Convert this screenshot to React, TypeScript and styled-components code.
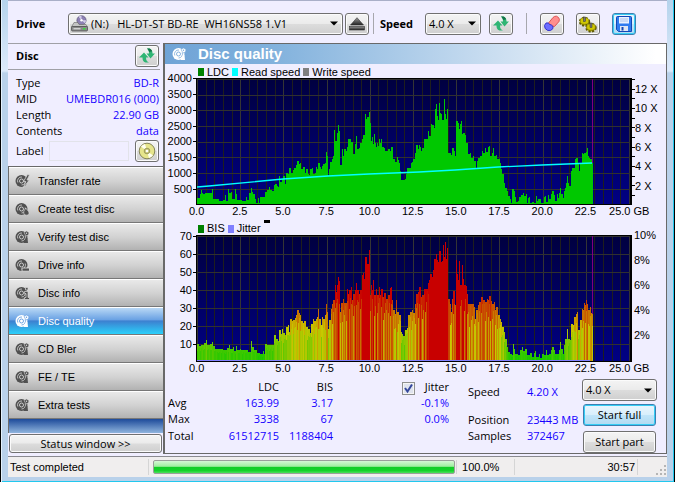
import React from "react";
import styled, { createGlobalStyle, css } from "styled-components";

const ui = `"Open Sans", "Noto Sans", sans-serif`;
const arial = `"Liberation Sans", Arial, sans-serif`;
const blue = "#1400ff";

const GlobalStyle = createGlobalStyle`
  * { box-sizing: border-box; }
  body { margin: 0; background: #b9d1ea; }
  button, select, input { font: inherit; color: inherit; margin: 0; }
`;

const Frame = styled.div`
  min-height: 100vh;
  display: flex;
  padding: 0 7px 5px;
  background: linear-gradient(#b5d3ec 0, #dceafa 71px, #b9d1ea 73px);
  border: 1px solid #000;
  border-top: 0;
  box-shadow: inset 1px 0 #e4f1fc, inset -1px -1px #22c8ee;
  font: 11px/16px ${ui};
  color: #000;
`;
const Client = styled.div`
  flex: 1;
  min-width: 0;
  display: flex;
  flex-direction: column;
  background: #f0eeff;
  border-top: 1px solid #a9afc8;
`;

const Toolbar = styled.header`
  height: 42px;
  display: flex;
  align-items: center;
  padding: 3px 30px 0 8px;
`;
const BoldLabel = styled.label<{ $width: number }>`
  font-weight: 700;
  width: ${(p) => p.$width}px;
`;
const Separator = styled.span<{ $left: number; $right: number }>`
  width: 1px;
  height: 21px;
  background: #a7a7ad;
  margin: 0 ${(p) => p.$right}px 0 ${(p) => p.$left}px;
`;

const face = css`
  background: linear-gradient(#f4f4f4, #ebebeb 48%, #dcdcdc 52%, #cfcfcf);
  border: 1px solid #707070;
  border-radius: 3px;
  box-shadow: inset 0 0 0 1px #fbfbfb;
`;
const hot = css`
  background: linear-gradient(#eaf6fd, #d8effc 48%, #c0e5f9 52%, #b0daf2);
  border: 1px solid #3c7fb1;
  border-radius: 3px;
  box-shadow: inset 0 0 0 1px #35cdf5;
`;
const IconButton = styled.button<{ $hot?: boolean; $gap?: number }>`
  ${(p) => (p.$hot ? hot : face)}
  width: 24px;
  height: 22px;
  flex: none;
  padding: 0;
  display: grid;
  place-items: center;
  margin-left: ${(p) => p.$gap ?? 0}px;
`;
const PushButton = styled.button<{ $hot?: boolean }>`
  ${(p) => (p.$hot ? hot : face)}
  height: 22px;
  padding: 0;
`;

const SelectBox = styled.span<{ $width?: number }>`
  display: grid;
  align-items: center;
  flex: ${(p) => (p.$width ? `0 0 ${p.$width}px` : "0 1 275px")};
  min-width: 0;
  height: 22px;
  > * { grid-area: 1 / 1; }
  > svg { justify-self: end; margin-right: 5px; pointer-events: none; }
`;
const SelectField = styled.select<{ $indent: number }>`
  ${face}
  appearance: none;
  width: 100%;
  height: 22px;
  padding: 0 14px 0 ${(p) => p.$indent}px;
`;
const DriveSlot = styled.span`
  display: grid;
  flex: 0 1 275px;
  min-width: 0;
  align-items: center;
  > * { grid-area: 1 / 1; }
  > svg { margin-left: 3px; pointer-events: none; }
`;

const Arrow = () => (
  <svg width="8" height="5" viewBox="0 0 8 5"><path d="M0 .5h8L4 4.5z" fill="#000" /></svg>
);

function Select({ id, label, width, indent = 3, options }: { id: string; label?: string; width?: number; indent?: number; options: string[] }) {
  return (
    <SelectBox $width={width}>
      <SelectField id={id} aria-label={label} $indent={indent}>
        {options.map((o) => <option key={o}>{o}</option>)}
      </SelectField>
      <Arrow />
    </SelectBox>
  );
}

const Body = styled.div`
  flex: 1;
  display: grid;
  grid-template-columns: 155px minmax(0, 1fr);
`;

const Side = styled.aside`
  display: flex;
  flex-direction: column;
`;
const DiscHead = styled.div`
  display: flex;
  align-items: center;
  justify-content: space-between;
  height: 27px;
  margin-right: 3px;
  padding: 0 1px 1px 8px;
  border: solid #a0a0a6;
  border-width: 1px 0;
  font-weight: 700;
`;
const Facts = styled.dl`
  margin: 0;
  padding: 5px 4px 0 8px;
  display: grid;
  grid-template-columns: auto 1fr;
  dd { margin: 0; text-align: right; color: ${blue}; }
`;
const LabelRow = styled.div`
  display: flex;
  align-items: center;
  height: 27px;
  padding: 0 4px 4px 8px;
  label { width: 33px; }
`;
const LabelInput = styled.input`
  flex: 1;
  min-width: 0;
  height: 20px;
  margin-right: 6px;
  background: #f0eeff;
  border: 1px solid #e2e3ea;
`;
const Nav = styled.nav`
  border-left: 1px solid #6d6d6d;
  border-top: 1px solid #696969;
  background: linear-gradient(#1d4a9a, #8fb4dd) bottom / 100% 14px no-repeat;
  padding-bottom: 14px;
`;
const NavButton = styled.button<{ $active?: boolean }>`
  display: flex;
  align-items: center;
  gap: 8px;
  width: 100%;
  height: 28px;
  padding: 0 0 0 6px;
  border: 0;
  border-top: 1px solid #fff;
  border-bottom: 1px solid #777;
  font: 11px/14px ${arial};
  color: ${(p) => (p.$active ? "#fff" : "#000")};
  background: ${(p) => p.$active
    ? "linear-gradient(#b9d8f5, #6aa2e4 45%, #3d80d0 50%, #2ad0fa)"
    : "linear-gradient(#e9e9e9, #d2d2d2 50%, #b2b2b2)"};
`;
const StatusButton = styled(PushButton)`
  margin: 1px 1px 0;
  height: 19px;
  line-height: 16px;
`;

const Panel = styled.main`
  display: flex;
  flex-direction: column;
  border: 1px solid #696969;
  border-left-width: 2px;
  margin-bottom: 2px;
`;
const Title = styled.h1`
  margin: 0;
  height: 20px;
  display: flex;
  align-items: center;
  gap: 11px;
  padding-left: 7px;
  font: 700 15px/20px ${arial};
  color: #fff;
  background: linear-gradient(90deg, #6fa3d6, #7fb0dc 20%, #c4daef 62%, #fff 98%);
`;

const ChartBox = styled.section`
  font: 11px/13px ${arial};
`;
const Legend = styled.div<{ $tall?: boolean }>`
  display: flex;
  align-items: center;
  height: ${(p) => (p.$tall ? 16 : 14)}px;
  padding: ${(p) => (p.$tall ? 3 : 2)}px 0 0 33px;
  white-space: pre;
`;
const Key = styled.span<{ $color: string }>`
  display: flex;
  align-items: center;
  margin-right: 3px;
  &::before {
    content: "";
    width: 6px;
    height: 8px;
    margin-right: 3px;
    background: ${(p) => p.$color};
  }
`;
const Marker = styled.span`
  align-self: flex-start;
  width: 6px;
  height: 3px;
  margin-top: -2px;
  background: #000;
`;
const PlotRow = styled.div`
  display: grid;
  grid-template-columns: 31px minmax(0, 1fr) 34px;
  height: 127px;
`;
const LeftScale = styled.div<{ $lift: number }>`
  display: flex;
  flex-direction: column;
  height: 126px;
  margin-top: -${(p) => p.$lift}px;
  span {
    flex: 1;
    display: flex;
    align-items: center;
    justify-content: flex-end;
    gap: 1px;
  }
  span::after { content: ""; width: 3px; height: 1px; background: #000; }
`;
const RightScale = styled.div<{ $top: number; $height: number }>`
  display: flex;
  flex-direction: column;
  height: ${(p) => p.$height}px;
  margin-top: ${(p) => p.$top}px;
  span { flex: 1; display: flex; align-items: center; }
`;
const RightSide = styled.div<{ $pad: number }>`
  display: flex;
  padding-left: ${(p) => p.$pad}px;
  white-space: nowrap;
`;
const Plot = styled.svg`
  display: block;
  width: 100%;
  height: 127px;
  border: 1px solid #000;
  border-right-width: 2px;
  background: linear-gradient(#000040, #000084);
`;
const BottomScale = styled.div`
  display: flex;
  margin-left: 10px;
  height: 14px;
  span { flex: 1; text-align: center; }
  span:last-child { flex: 0 0 59px; text-align: left; padding-left: 2px; }
`;

/* Traces are flat x, y lists on a grid three units to the pixel. */
type Trace = { dx: number; base: number; pts: number[] };

const ldc: Trace[] = [
  { dx: -111, base: 434, pts: [111,415,120,405,124,393,127,400,130,405,135,400,155,402,157,388,159,405,160,418,170,420,178,424,190,421,196,408,198,424,204,388,207,400,213,398,216,420,226,390,228,405,231,422,245,424,258,412,262,422,266,400,273,385,276,398,280,405,284,420,288,430,293,415,297,430,301,414,310,412,316,398,322,393,327,382,331,393,336,396,341,376,345,373,350,380,354,382,358,350,361,367,366,358,370,350,374,375,378,340,383,343,388,325,392,340,396,340,400,333,403,325,407,317,412,306,416,315,420,310,424,330,430,322,434,340,439,330,443,345,447,348,451,330,455,325,459,343,464,340,468,322,472,330,475,310,479,322,482,328,486,320,490,315,496,310,499,278,502,290,505,348,508,330,511,308,515,300,518,290,522,212,526,245,530,220,534,198,538,215,541,318,545,270,550,290,553,270,557,275,560,262,565,240,570,240,574,248,579,285,584,255,588,230,592,270,597,265,601,250,605,240,608,227,612,227,615,165,619,180,622,172,626,158,629,190,632,245,635,232,639,253,641,225,644,250,648,262,651,250,655,260,657,238,660,250,663,240,667,262,671,265,675,275,679,275,683,268,688,270,691,275,694,262,698,262,700,300,706,308,710,293,714,302,718,310,721,335,724,362,735,360,738,345,742,325,747,325,752,310,756,308,760,300,764,282,769,258,773,270,777,258] },
  { dx: 654, base: 434, pts: [14,262,18,275,22,265,26,240,30,238,34,240,38,215,43,230,47,195,52,198,56,207,60,150,63,135,66,170,69,182,72,130,75,160,79,165,82,182,86,120,89,165,93,180,96,150,98,165,99,280,104,282,108,288,112,265,117,275,121,290,124,185,128,190,132,210,134,195,138,185,141,225,145,222,149,228,152,250,156,250,160,285,164,280,168,295,174,290,178,305,182,325,185,305,190,295,195,290,200,275,205,280,209,265,213,278,218,262,223,260,226,290,230,280,234,265,238,290,242,288,246,300,250,300,254,310,258,330,262,345,266,370,270,385,275,395,280,410,285,420,288,430,292,390,296,395,299,412,303,428,308,425,312,412,317,408,323,402,328,410,332,405,336,430,339,415,343,412,346,430,350,415,352,428,358,430,362,410,366,425,370,420,378,430,382,432,386,412,390,410,394,428,398,408,402,420,408,405,412,395,416,408,420,425,425,405,429,415,433,400,436,385,439,405,443,415,447,395,451,385,454,370,457,350,460,372,463,380,467,335,471,325,476,325,480,300,484,297,488,310,492,335,496,310,500,280,504,285,508,280,513,278,516,267,519,290,522,295,526,300,530,310] },
];
const bis: Trace[] = [
  { dx: -111, base: 437, pts: [111,385,118,392,124,388,132,383,138,373,142,388,150,385,157,380,160,392,166,400,178,400,188,405,200,398,206,388,210,400,218,395,222,408,227,393,231,405,240,400,244,405,255,403,265,410,273,378,276,395,282,405,290,412,300,415,308,408,313,415,316,385,322,390,332,388,338,390,343,360,347,372,354,378,358,345,362,355,367,340,370,352,374,360,378,335,383,330,387,350,390,310,395,318,400,315,405,308,408,300,412,285,416,292,420,300,424,318,428,322,433,318,438,335,444,340,450,352,454,325,458,310,462,318,467,310,472,305,475,282,478,310,482,328,486,305,490,312,496,300,499,265,502,290,505,340,508,315,512,280,516,265,520,255,524,210,528,230,532,210,535,185,538,198,540,290,543,262,548,250,553,262,558,262,560,220,563,235,567,225,572,215,576,255,580,235,585,225,589,203,592,225,597,235,601,225,605,180,608,173,611,190,614,200,616,125,620,145,623,145,626,105,629,240,633,210,637,225,640,195,643,240,648,222,652,240,656,215,660,240,664,222,668,245,672,232,677,250,682,250,685,240,690,218,693,215,697,255,700,285,704,295,707,255,710,290,714,290,718,300,722,350,726,355,730,362,734,345,740,338,745,300,750,290,756,285,760,292,765,265,769,235,773,230,777,215] },
  { dx: 654, base: 437, pts: [14,215,18,245,22,240,26,220,30,222,34,220,38,203,42,195,46,175,50,185,54,165,58,130,63,115,67,135,70,140,73,108,77,140,80,138,83,88,86,125,89,80,92,130,96,98,99,250,105,265,108,290,112,250,115,228,119,240,121,270,124,135,127,175,130,195,133,137,136,210,140,150,143,190,147,210,152,212,155,235,160,265,166,265,172,265,176,275,180,312,184,285,188,270,193,260,198,245,203,255,210,260,215,252,220,255,223,242,227,258,231,265,236,260,240,285,244,275,249,300,254,310,258,320,262,335,266,350,270,370,275,395,280,410,285,415,290,420,293,385,296,400,300,415,308,418,314,405,320,395,324,408,330,400,335,420,342,420,346,412,350,425,356,412,360,408,364,425,372,415,376,428,382,415,388,420,393,405,397,420,403,415,408,405,412,395,416,405,420,415,427,415,431,405,435,380,439,400,443,415,447,390,451,370,457,340,460,370,464,375,468,325,473,330,478,305,482,295,487,290,490,345,495,315,500,280,503,285,506,262,509,268,512,255,516,265,520,285,525,275,529,292] },
];

const COUNT = 396;
function columns(traces: Trace[]): number[] {
  const out: number[] = new Array(COUNT).fill(0);
  let from = 0;
  let last = 0;
  for (const t of traces) {
    for (let i = 0; i < t.pts.length; i += 2) {
      const x = Math.round((t.pts[i] + t.dx) / 3);
      for (; from < x && from < COUNT; from++) out[from] = last;
      last = Math.round((t.base - t.pts[i + 1]) / 3);
    }
  }
  for (; from < COUNT; from++) out[from] = last;
  return out;
}
const ldcColumns = columns(ldc);
const bisColumns = columns(bis);

function heat(height: number) {
  const v = height / 1.8;
  const r = Math.min(200, Math.round(v * 10));
  const g = Math.max(0, Math.min(200, Math.round(200 - (v - 20) * 10)));
  return `rgb(${r},${g},0)`;
}
const jitterOf = (i: number) => ((i * 7919 + (i % 7) * 131 + (i % 11) * 37) % 97) / 97;

function Grid({ rows }: { rows: number }) {
  const lines = [];
  for (let i = 0; i <= 50; i++) {
    const x = Math.round(i * 8.64);
    lines.push(<rect key={`v${i}`} x={x} y="0" width="1" height="125" fill={i % 5 ? "#1e1e1e" : "#343434"} />);
  }
  for (let i = 0; i < rows; i++) {
    lines.push(<rect key={`h${i}`} x="0" y={Math.round((i * 125.5) / rows)} width="433" height="1" fill="#303030" />);
  }
  return <g shapeRendering="crispEdges">{lines}</g>;
}

const xTicks = ["0.0", "2.5", "5.0", "7.5", "10.0", "12.5", "15.0", "17.5", "20.0", "22.5", "25.0 GB"];
const XScale = () => <BottomScale>{xTicks.map((t) => <span key={t}>{t}</span>)}</BottomScale>;

function LdcChart() {
  return (
    <ChartBox>
      <Legend>
        <Key $color="#008000">LDC</Key>
        <Key $color="#00ffff">Read speed</Key>
        <Key $color="#808080">Write speed</Key>
      </Legend>
      <PlotRow>
        <LeftScale $lift={7}>
          {[4000, 3500, 3000, 2500, 2000, 1500, 1000, 500].map((n) => <span key={n}>{n}</span>)}
        </LeftScale>
        <Plot viewBox="0 0 433 125" preserveAspectRatio="none" role="img" aria-label="LDC and read speed">
          <Grid rows={8} />
          <g fill="#00c800" shapeRendering="crispEdges">
            {ldcColumns.map((h, i) => <rect key={i} x={i} y={125 - h} width="1" height={h} />)}
          </g>
          <rect x="395" y="0" width="1" height="84" fill="#800080" shapeRendering="crispEdges" />
          <polyline points="0,108 12,107 86,100 131,97 172,95 222,93 258,91 301,88 345,86 395,84" fill="none" stroke="#00ffff" strokeWidth="1.3" />
        </Plot>
        <RightSide $pad={0}>
          <svg width="3" height="127" viewBox="0 0 3 127">
            {Array.from({ length: 13 }, (_, i) => (
              <rect key={i} x="0" y={Math.round(1 + i * 9.65)} width="3" height="1" />
            ))}
          </svg>
          <RightScale $top={2} $height={116}>
            {["12 X", "10 X", "8 X", "6 X", "4 X", "2 X"].map((t) => <span key={t}>{t}</span>)}
          </RightScale>
        </RightSide>
      </PlotRow>
      <XScale />
    </ChartBox>
  );
}

function BisChart() {
  return (
    <ChartBox>
      <Legend $tall>
        <Key $color="#008000">BIS</Key>
        <Key $color="#8080ff">Jitter</Key>
        <Marker />
      </Legend>
      <PlotRow>
        <LeftScale $lift={8}>
          {[70, 60, 50, 40, 30, 20, 10].map((n) => <span key={n}>{n}</span>)}
        </LeftScale>
        <Plot viewBox="0 0 433 125" preserveAspectRatio="none" role="img" aria-label="BIS and jitter">
          <Grid rows={7} />
          <g shapeRendering="crispEdges">
            {bisColumns.map((h, i) => {
              const low = Math.round(h * (0.6 + 0.4 * jitterOf(i)));
              return (
                <React.Fragment key={i}>
                  <rect x={i} y={125 - h} width="1" height={h} fill={heat(h)} />
                  <rect x={i} y={125 - low} width="1" height={low} fill={heat(h > 80 ? h : low)} />
                </React.Fragment>
              );
            })}
          </g>
          <rect x="395" y="0" width="1" height="78" fill="#800080" shapeRendering="crispEdges" />
          <rect x="0" y="124" width="393" height="1" fill="#8080ff" />
        </Plot>
        <RightSide $pad={2}>
          <RightScale $top={-12} $height={125}>
            {["10%", "8%", "6%", "4%", "2%"].map((t) => <span key={t}>{t}</span>)}
          </RightScale>
        </RightSide>
      </PlotRow>
      <XScale />
    </ChartBox>
  );
}

const Results = styled.div`
  display: flex;
  padding: 3px 9px 0 3px;
  height: 77px;
`;
const Stats = styled.table`
  border-collapse: collapse;
  table-layout: fixed;
  width: 281px;
  height: 65px;
  th, td { padding: 0; font-weight: 400; text-align: right; height: 16px; }
  td { color: ${blue}; }
  th[scope="row"] { text-align: left; }
`;
const Col = styled.col<{ $w: number }>`width: ${(p) => p.$w}px;`;
const Check = styled.input`
  appearance: none;
  display: block;
  width: 13px;
  height: 13px;
  border: 1px solid #8e8f8f;
  background: #dfe3ee;
  box-shadow: inset 0 0 0 1px #f4f4f4;
`;
const CheckWrap = styled.span`
  display: inline-grid;
  vertical-align: middle;
  > * { grid-area: 1 / 1; }
  > svg { pointer-events: none; }
`;
const Readout = styled.dl`
  margin: 0 0 0 19px;
  display: grid;
  grid-template-columns: 59px auto;
  grid-template-rows: 33px 16px 16px;
  align-content: start;
  line-height: 16px;
  dt, dd { margin: 0; white-space: nowrap; }
  dt:nth-of-type(1), dd:nth-of-type(1) { padding-top: 5px; }
  dd { color: ${blue}; }
`;
const Actions = styled.div`
  margin-left: auto;
  width: 75px;
  display: flex;
  flex-direction: column;
  gap: 3px;
  > span { flex: none; }
  > button { margin: 0 1px; }
  > button:last-child { margin-top: 2px; }
`;

const StatusBar = styled.footer`
  height: 21px;
  display: flex;
  align-items: center;
  background: #f0eeee;
  border-top: 1px solid #8a8a90;
  font: 11px/14px ${arial};
`;
const Pane = styled.span<{ $w?: number; $right?: boolean }>`
  flex: ${(p) => (p.$w ? `0 0 ${p.$w}px` : "1")};
  height: 16px;
  padding: 1px 2px;
  border-right: 1px solid #d5d5d5;
  text-align: ${(p) => (p.$right ? "right" : "left")};
`;
const ProgressPane = styled.span`
  flex: 2 1 308px;
  padding: 0 1px 0 4px;
  border-right: 1px solid #d5d5d5;
`;
const Progress = styled.div`
  height: 14px;
  border: 1px solid #9a9f9a;
  border-radius: 2px;
  background: linear-gradient(#d5f7d5, #9eee9e 45%, #12cc26 50%, #14d22a 80%, #4be05c);
`;

const DiscIcon = ({ color = "#505050", hole = "#d8d8d8", kind = "quality" }: { color?: string; hole?: string; kind?: string }) => (
  <svg width="15" height="14" viewBox="0 0 15 14">
    <circle cx="6.500" cy="7" r="6" fill={color} />
    <path d="M2.800 8.500A4 4 0 0 1 7 3M10.200 5.500A4 4 0 0 1 6.500 11" fill="none" stroke={hole} strokeWidth=".8" />
    <circle cx="6.500" cy="7" r="2" fill="none" stroke={hole} strokeWidth=".9" />
    {kind === "rate" && <path d="M12.500 .5 8.500 7.500h2.300L8.500 13.500l5.800-7.500h-2.300L14.500 1z" fill={color} stroke={hole} strokeWidth=".8" />}
    {kind === "create" && <path d="M10.800 6c-.8 2-2.800 3-2 5.500 1 2.200 4.700 2.200 5.200 0C14.500 9 12 8.500 10.800 6z" fill={color} stroke={hole} strokeWidth=".7" />}
    {kind === "drive" && <path d="M7 10h7.500v3.200H7z" fill={color} stroke={hole} strokeWidth=".9" />}
    {kind === "info" && <path d="M9.500 5.500H13v6h1.500v2h-5v-2H11v-4H9.500zM10.500 1.500H13V4h-2.500z" fill={color} stroke={hole} strokeWidth=".7" />}
    {kind === "quality" && (
      <g fill={color}>
        <path d="M9 2.500 11.500 1l2.500 1.500-.5 2.500-2.500 1z" stroke={hole} strokeWidth=".6" />
        <circle cx="11.500" cy="3.300" r=".7" fill={hole} />
        <path d="M10.500 8.500 12.500 8l.5 5H8.500z" />
      </g>
    )}
  </svg>
);
const TitleIcon = () => <DiscIcon color="#fff" hole="#78a9d9" />;

const RefreshIcon = () => (
  <svg width="18" height="18" viewBox="0 0 18 18">
    <path d="M6 5.500 10.500 10.500H8c0 3 1 4 3 5H7.500c-2.500-1-3-2.500-3-5H1z" fill="#2fb574" />
    <path d="M9 1.500h2.500c2.500 1 3 3 3 5h2.500L12.500 11.500 8.500 6.500H11c0-2-.5-3.500-2-5z" fill="#2fb574" />
    <path d="M9 1.500h2.500c1.500.6 2.300 1.600 2.700 2.700l-3 .8C10.800 3.700 10.200 2.500 9 1.500z" fill="#157548" />
  </svg>
);
const EjectIcon = () => (
  <svg width="16" height="14" viewBox="0 0 16 14">
    <defs>
      <linearGradient id="ej" x2="0" y2="1"><stop stopColor="#999" /><stop offset="1" stopColor="#222" /></linearGradient>
    </defs>
    <path d="M8 .7 14.500 8h-13z" fill="url(#ej)" stroke="#333" strokeWidth=".6" />
    <rect x=".5" y="9.500" width="15" height="3.500" fill="url(#ej)" stroke="#333" strokeWidth=".6" />
  </svg>
);
const EraserIcon = () => (
  <svg width="18" height="17" viewBox="0 0 18 17">
    <path d="M5.500 8 10 2.500Q11.500 1 13.500 1.200L15.500 2.500Q17 4 16 6.500L11.500 11.500Q8 12 5.500 8z" fill="#ff8e8e" stroke="#d84a4a" strokeWidth=".9" />
    <path d="M3 8Q5.500 7.200 6.800 9.500 10.500 10 10 13.500 8 16.300 4.800 15.500 1.200 14 1.500 10.500z" fill="#6c6cff" stroke="#2b2bc8" strokeWidth=".9" />
  </svg>
);
const GearsIcon = () => (
  <svg width="20" height="18" viewBox="0 0 20 18">
    {[[6.5, 6], [13, 12]].map(([x, y]) => (
      <g key={x}>
        <ellipse cx={x} cy={y + 0.7} rx="4.600" ry="3.800" fill="#b8b000" stroke="#5b5600" strokeWidth="2.200" strokeDasharray="2 1.400" />
        <ellipse cx={x} cy={y} rx="4.400" ry="3.300" fill="#d0c800" stroke="#857e00" strokeWidth=".7" />
        <rect x={x - 1} y={y - 4} width="2" height="4.500" fill="#777" stroke="#333" strokeWidth=".5" />
      </g>
    ))}
  </svg>
);
const SaveIcon = () => (
  <svg width="16" height="16" viewBox="0 0 16 16">
    <path d="M.5 1.500q0-1 1-1h13q1 0 1 1v14H2.500l-2-2z" fill="#2f7bf0" stroke="#1446b4" />
    <rect x="3" y="1" width="10" height="6.500" fill="#e9f1ff" />
    <path d="M4 3h8M4 5h8" stroke="#9db8e6" strokeWidth=".8" />
    <rect x="4" y="10" width="8" height="5" fill="#dfe6f3" />
    <rect x="5.500" y="11" width="2" height="3.500" fill="#1446b4" />
  </svg>
);
const GoldDisc = () => (
  <svg width="18" height="18" viewBox="0 0 18 18">
    <circle cx="9" cy="9" r="7.800" fill="#e6e58c" stroke="#85855a" />
    <path d="M9 9 3 4.500A7.300 7.300 0 0 1 7 2zM9 9l6 4.500A7.300 7.300 0 0 1 11 16z" fill="#fffff0" />
    <circle cx="9" cy="9" r="2.800" fill="#c9c77a" stroke="#8d8c50" strokeWidth=".8" />
    <circle cx="9" cy="9" r="1.300" fill="#fff" />
  </svg>
);
const DriveIcon = () => (
  <svg width="17" height="17" viewBox="0 0 17 17">
    <circle cx="10.500" cy="5.300" r="4.600" fill="#8d80b4" stroke="#5b5378" strokeWidth=".7" />
    <path d="M10.500 5.300 7.500 1.800A4.600 4.600 0 0 1 10.500.8zM10.500 5.300 14 8.300A4.600 4.600 0 0 0 15 5.300z" fill="#d3cce8" />
    <circle cx="10.500" cy="5.300" r="1.200" fill="#fff" />
    <path d="M3 7.500h4l1 2h7l1.500 2.500H.5z" fill="#c4c4c4" stroke="#666" strokeWidth=".6" />
    <rect x=".5" y="11.500" width="16" height="4.500" rx="1" fill="#8b8b8b" stroke="#444" strokeWidth=".7" />
    <path d="M2.500 13.800h7" stroke="#eee" />
    <rect x="12" y="13" width="2.500" height="1.500" fill="#36e03a" />
  </svg>
);

const Grip = styled.svg`
  flex: none;
  align-self: flex-end;
  margin: 0 1px 2px 18px;
`;

const pages: [string, string][] = [
  ["Transfer rate", "rate"],
  ["Create test disc", "create"],
  ["Verify test disc", "quality"],
  ["Drive info", "drive"],
  ["Disc info", "info"],
  ["Disc quality", "quality"],
  ["CD Bler", "quality"],
  ["FE / TE", "quality"],
  ["Extra tests", "quality"],
];
const nb = "\u00a0";

export default function App() {
  return (
    <>
      <GlobalStyle />
      <Frame>
        <Client>
          <Toolbar>
            <BoldLabel $width={52} htmlFor="drive">Drive</BoldLabel>
            <DriveSlot>
              <Select id="drive" indent={22} options={[`(N:)${nb}${nb} HL-DT-ST BD-RE${nb} WH16NS58 1.V1`]} />
              <DriveIcon />
            </DriveSlot>
            <IconButton $gap={2} aria-label="Eject"><EjectIcon /></IconButton>
            <Separator $left={4} $right={6} />
            <BoldLabel $width={45} htmlFor="speed">Speed</BoldLabel>
            <Select id="speed" width={56} options={["4.0 X"]} />
            <IconButton $gap={8} aria-label="Refresh speeds"><RefreshIcon /></IconButton>
            <Separator $left={13} $right={1} />
            <IconButton $gap={12} aria-label="Erase"><EraserIcon /></IconButton>
            <IconButton $gap={12} aria-label="Options"><GearsIcon /></IconButton>
            <IconButton $gap={12} $hot aria-label="Save"><SaveIcon /></IconButton>
          </Toolbar>
          <Body>
            <Side>
              <DiscHead>
                Disc
                <IconButton aria-label="Refresh disc"><RefreshIcon /></IconButton>
              </DiscHead>
              <Facts>
                <dt>Type</dt><dd>BD-R</dd>
                <dt>MID</dt><dd>UMEBDR016 (000)</dd>
                <dt>Length</dt><dd>22.90 GB</dd>
                <dt>Contents</dt><dd>data</dd>
              </Facts>
              <LabelRow>
                <label htmlFor="disc-label">Label</label>
                <LabelInput id="disc-label" />
                <IconButton aria-label="Read label"><GoldDisc /></IconButton>
              </LabelRow>
              <Nav>
                {pages.map(([name, kind]) => {
                  const active = name === "Disc quality";
                  return (
                    <NavButton key={name} $active={active}>
                      <DiscIcon kind={kind} color={active ? "#fff" : undefined} hole={active ? "#5f9ae0" : undefined} />
                      {name}
                    </NavButton>
                  );
                })}
              </Nav>
              <StatusButton>Status window &gt;&gt;</StatusButton>
            </Side>
            <Panel>
              <Title><TitleIcon />Disc quality</Title>
              <LdcChart />
              <BisChart />
              <Results>
                <Stats>
                  <colgroup>
                    <Col $w={40} /><Col $w={71} /><Col $w={54} /><Col $w={82} /><Col $w={34} />
                  </colgroup>
                  <thead>
                    <tr>
                      <td />
                      <th scope="col">LDC</th>
                      <th scope="col">BIS</th>
                      <td>
                        <CheckWrap>
                          <Check id="jitter" type="checkbox" defaultChecked />
                          <svg width="13" height="13" viewBox="0 0 13 13">
                            <path d="m3 6 2.500 3.500L10 2.500" fill="none" stroke="#34479c" strokeWidth="2" />
                          </svg>
                        </CheckWrap>
                      </td>
                      <th scope="col"><label htmlFor="jitter">Jitter</label></th>
                    </tr>
                  </thead>
                  <tbody>
                    <tr><th scope="row">Avg</th><td>163.99</td><td>3.17</td><td /><td>-0.1%</td></tr>
                    <tr><th scope="row">Max</th><td>3338</td><td>67</td><td /><td>0.0%</td></tr>
                    <tr><th scope="row">Total</th><td>61512715</td><td>1188404</td><td /><td /></tr>
                  </tbody>
                </Stats>
                <Readout>
                  <dt>Speed</dt><dd>4.20 X</dd>
                  <dt>Position</dt><dd>23443 MB</dd>
                  <dt>Samples</dt><dd>372467</dd>
                </Readout>
                <Actions>
                  <Select id="test-speed" label="Test speed" width={75} options={["4.0 X"]} />
                  <PushButton $hot>Start full</PushButton>
                  <PushButton>Start part</PushButton>
                </Actions>
              </Results>
            </Panel>
          </Body>
          <StatusBar>
            <Pane $w={141}>Test completed</Pane>
            <ProgressPane>
              <Progress role="progressbar" aria-label="Test progress" aria-valuenow={100} />
            </ProgressPane>
            <Pane $w={58}>{nb}100.0%</Pane>
            <Pane $w={123} $right>30:57</Pane>
            <Grip width="10" height="10" viewBox="0 0 10 10">
              {[[8, 0], [4, 4], [8, 4], [0, 8], [4, 8], [8, 8]].map(([x, y]) => (
                <rect key={`${x}-${y}`} x={x} y={y} width="2" height="2" fill="#b5b5b5" />
              ))}
            </Grip>
          </StatusBar>
        </Client>
      </Frame>
    </>
  );
}
